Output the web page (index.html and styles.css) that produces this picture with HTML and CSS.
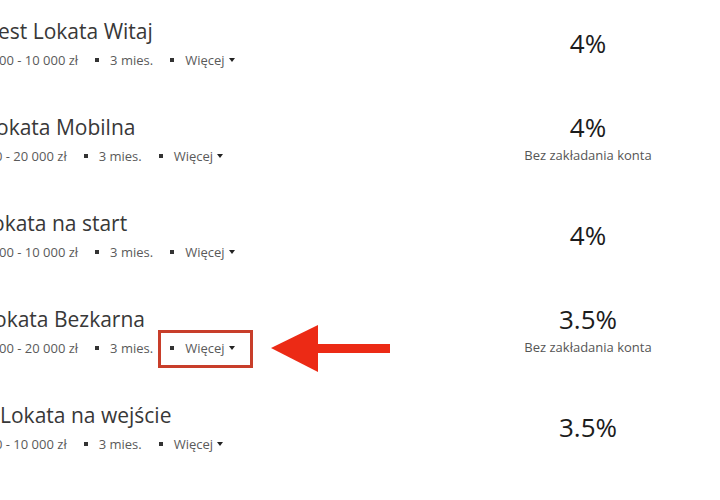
FILE: index.html
```html
<!DOCTYPE html>
<html lang="pl">
<head>
<meta charset="utf-8">
<title>Lokaty</title>
<link rel="stylesheet" href="styles.css">
</head>
<body>
<div class="page">
  <div class="list">
    <div class="row r1">
      <div class="info">
        <div class="title">est Lokata Witaj</div>
        <div class="meta"><span>00 - 10 000 zł</span><i class="dot"></i><span>3 mies.</span><i class="dot"></i><span class="more">Więcej<i class="caret"></i></span></div>
      </div>
      <div class="rate"><div class="pct">4%</div></div>
    </div>
    <div class="row r2">
      <div class="info">
        <div class="title">okata Mobilna</div>
        <div class="meta"><span>0 - 20 000 zł</span><i class="dot"></i><span>3 mies.</span><i class="dot"></i><span class="more">Więcej<i class="caret"></i></span></div>
      </div>
      <div class="rate"><div class="pct">4%</div><div class="note">Bez zakładania konta</div></div>
    </div>
    <div class="row r3">
      <div class="info">
        <div class="title">okata na start</div>
        <div class="meta"><span>00 - 10 000 zł</span><i class="dot"></i><span>3 mies.</span><i class="dot"></i><span class="more">Więcej<i class="caret"></i></span></div>
      </div>
      <div class="rate"><div class="pct">4%</div></div>
    </div>
    <div class="row r4">
      <div class="info">
        <div class="title">okata Bezkarna</div>
        <div class="meta"><span>00 - 20 000 zł</span><i class="dot"></i><span>3 mies.</span><i class="dot"></i><span class="more">Więcej<i class="caret"></i></span></div>
      </div>
      <div class="rate"><div class="pct">3.5%</div><div class="note">Bez zakładania konta</div></div>
    </div>
    <div class="row r5">
      <div class="info">
        <div class="title">Lokata na wejście</div>
        <div class="meta"><span>0 - 10 000 zł</span><i class="dot"></i><span>3 mies.</span><i class="dot"></i><span class="more">Więcej<i class="caret"></i></span></div>
      </div>
      <div class="rate"><div class="pct">3.5%</div></div>
    </div>
  </div>
  <div class="highlight"></div>
  <svg class="arrow" width="126" height="54" viewBox="0 0 126 54" aria-hidden="true">
    <polygon points="3,26 50,3 50,50" fill="#ec2a15"/>
    <rect x="49" y="22" width="73" height="9" fill="#ec2a15"/>
  </svg>
</div>
</body>
</html>
```
FILE: styles.css
```css
html, body {
  margin: 0;
  padding: 0;
  background: #ffffff;
}
body {
  width: 720px;
  height: 500px;
  overflow: hidden;
  font-family: "Open Sans", "Liberation Sans", sans-serif;
  color: #333;
}
.page {
  position: relative;
  width: 720px;
  height: 500px;
  overflow: hidden;
}
.list {
  margin-top: -5px;
  display: flex;
  flex-direction: column;
}
.row {
  height: 96px;
  display: flex;
  align-items: center;
  padding-right: 32px;
}
.info {
  flex: 1;
  display: flex;
  flex-direction: column;
  min-width: 0;
}
.title {
  font-size: 21px;
  line-height: 28px;
  color: #383838;
  white-space: nowrap;
}
.meta {
  margin-top: 6px;
  display: flex;
  align-items: center;
  font-size: 13px;
  line-height: 18px;
  color: #5a5a5a;
  white-space: nowrap;
}
.dot {
  display: inline-block;
  width: 4px;
  height: 4px;
  background: #333;
  margin: 0 11px 0 17px;
}
.more {
  display: inline-flex;
  align-items: center;
}
.caret {
  display: inline-block;
  width: 0;
  height: 0;
  border-left: 3.5px solid transparent;
  border-right: 3.5px solid transparent;
  border-top: 4.5px solid #222;
  margin-left: 4px;
}
.r1 .title { margin-left: -2px; }
.r1 .meta { margin-left: -1px; }
.r2 .title { margin-left: -4px; }
.r2 .meta { margin-left: -5px; }
.r3 .title { margin-left: -8px; }
.r3 .meta { margin-left: -1px; }
.r4 .title { margin-left: -6px; }
.r4 .meta { margin-left: -1px; }
.r5 .title { margin-left: 0; }
.r5 .meta { margin-left: -5px; }
.rate {
  width: 200px;
  display: flex;
  flex-direction: column;
  align-items: center;
}
.pct {
  font-size: 26px;
  line-height: 28px;
  color: #1c1c1c;
}
.note {
  font-size: 13px;
  line-height: 21px;
  margin-top: 4px;
  color: #555;
}
.highlight {
  position: absolute;
  left: 158px;
  top: 330px;
  width: 95px;
  height: 38px;
  box-sizing: border-box;
  border: 3px solid #c83e2a;
}
.arrow {
  position: absolute;
  left: 268px;
  top: 322px;
}
```
